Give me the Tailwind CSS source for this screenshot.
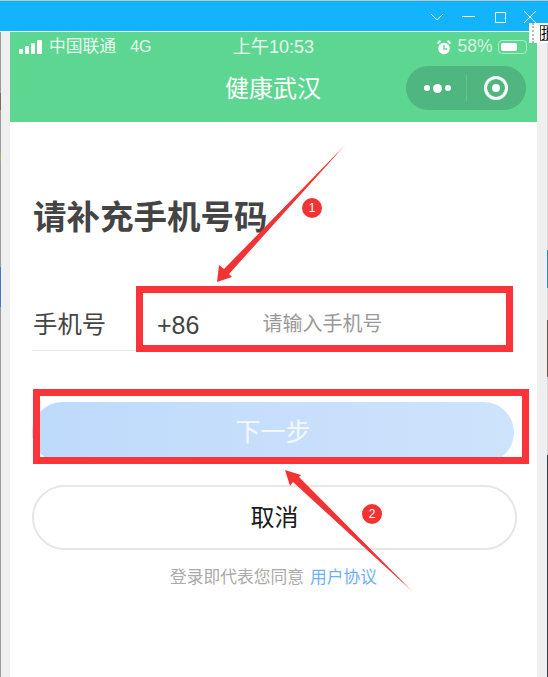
<!DOCTYPE html>
<html lang="zh-CN">
<head>
  <meta charset="UTF-8">
  <title>健康武汉</title>
  <script src="https://cdn.jsdelivr.net/npm/@tailwindcss/browser@4"></script>
</head>
<body class="bg-white">
  <div class="relative flex flex-col w-[548px] h-[677px] overflow-hidden font-['Liberation_Sans','Noto_Sans_CJK_SC',sans-serif]">

    <!-- window title bar -->
    <div class="flex items-center justify-end shrink-0 h-[32px] bg-[#12b5fd] border-t border-t-[#c4c4c4] border-b border-b-white text-white">
      <svg class="ml-[430px] mr-[8px]" width="110" height="30" viewBox="430 1 110 30" fill="none" stroke="#fff" stroke-width="1">
        <path d="M431 14l6 6 6-6"/>
        <path d="M462 16.500h13"/>
        <path d="M495.500 12.500h10v10h-10z"/>
        <path d="M524 11l12 12M536 11l-12 12"/>
      </svg>
    </div>

    <div class="flex flex-1 min-h-0">
      <!-- left edge of the window behind -->
      <div class="flex shrink-0 w-[10px] bg-[#efefef]">
        <div class="flex flex-col w-[1px] bg-[#9a9a9a]">
          <div class="h-[17px] mt-[61px] bg-[#7d6a5c]"></div>
          <div class="h-[8px] mt-[43px] bg-[#8fb37d]"></div>
          <div class="h-[40px] mt-[106px] bg-[#3f78c8]"></div>
        </div>
      </div>

      <!-- mini program page -->
      <main class="flex flex-col w-[527px] bg-white">
        <header class="shrink-0 h-[90px] bg-[#5cd691] text-white">
          <div class="flex items-center h-[30px] pl-[9px] text-[18px] text-white/85">
            <div class="flex items-end gap-[2px] w-[23px] h-[14px]">
              <span class="w-[4px] h-[5px] bg-white rounded-[1px]"></span>
              <span class="w-[4px] h-[8px] bg-white rounded-[1px]"></span>
              <span class="w-[4px] h-[11px] bg-white rounded-[1px]"></span>
              <span class="w-[5px] h-[14px] bg-white rounded-[1px]"></span>
            </div>
            <span class="ml-[7px] text-[16.800px]">中国联通</span>
            <span class="ml-[14px] text-[16px]">4G</span>
            <span class="ml-[78px] w-[88px] text-center whitespace-nowrap">上午10:53</span>
            <svg class="ml-[120px]" width="14" height="15" viewBox="0 0 14 15">
              <circle cx="7" cy="8.500" r="5.800" fill="#fff"/>
              <path d="M7 5v4h3" fill="none" stroke="#5cd691" stroke-width="1.400"/>
              <path d="M0.500 3.500L3.500 0.800M13.500 3.500L10.500 0.800" stroke="#fff" stroke-width="2"/>
            </svg>
            <span class="ml-[6px] text-[17.500px] leading-none text-white/75">58%</span>
            <div class="flex items-center ml-[5px] w-[29px] h-[14px] p-[2px] border border-white/50 rounded-[4px]">
              <div class="w-[16px] h-full bg-white rounded-[2px]"></div>
            </div>
          </div>
          <div class="relative flex items-center justify-center h-[60px] text-[24px] pb-[6px] pr-[1px]">
            健康武汉
            <div class="absolute left-[396px] top-[4px] flex items-center w-[120px] h-[44px] rounded-full bg-[#4fb680]">
              <div class="flex items-center justify-center gap-[3px] w-[60px] pl-[2px]">
                <span class="w-[6px] h-[6px] rounded-full bg-white"></span>
                <span class="w-[9px] h-[9px] rounded-full bg-white"></span>
                <span class="w-[6px] h-[6px] rounded-full bg-white"></span>
              </div>
              <div class="w-px h-[26px] bg-white/15"></div>
              <div class="flex items-center justify-center w-[59px] pr-[1px]">
                <div class="flex items-center justify-center w-[24px] h-[24px] rounded-full border-[3px] border-white">
                  <span class="w-[8px] h-[8px] rounded-full bg-white"></span>
                </div>
              </div>
            </div>
          </div>
        </header>

        <div class="flex flex-col flex-1 pl-[22px] pr-[20px]">
          <h1 class="mt-[76px] pl-[1px] text-[33.500px] leading-[40px] font-bold text-[#444] whitespace-nowrap">请补充手机号码</h1>

          <div class="flex items-center mt-[49px] h-[64px]">
            <div class="flex items-center w-[104px] h-[64px] pl-[1px] pt-[14px] border-b border-[#e8e8e8] text-[24.400px] text-[#444]">手机号</div>
            <span class="ml-[21px] mt-[14px] text-[25px] text-[#444]">+86</span>
            <span class="ml-[63px] mt-[10px] text-[20px] text-[#999]">请输入手机号</span>
          </div>

          <button class="mt-[51px] flex items-center justify-center w-[482px] h-[61px] rounded-full bg-gradient-to-r from-[#bedafb] to-[#cee3fc] text-[25px] text-white/80">下一步</button>

          <button class="mt-[22px] flex items-center justify-center w-[485px] h-[65px] rounded-full border-2 border-[#e6e6e6] text-[24px] text-[#1a1a1a]">取消</button>

          <p class="mt-[18px] pl-[138px] text-[16.750px] leading-[20px] text-[#aaa] whitespace-nowrap">登录即代表您同意<span class="ml-[6px] text-[#6fb0f5]">用户协议</span></p>
        </div>
      </main>

      <!-- right edge of the window behind -->
      <div class="flex justify-end shrink-0 w-[11px] bg-[#efefef]">
        <div class="flex flex-col w-[1px] bg-[#d8d8d8]">
          <div class="h-[38px] mt-[218px] bg-[#1f8fc0]"></div>
          <div class="h-[57px] mt-[32px] bg-[#6b5a50]"></div>
          <div class="flex-1 mt-[78px] bg-[#333b44]"></div>
        </div>
      </div>
    </div>

    <!-- clipped tooltip of another window -->
    <div class="absolute left-[529px] top-[23px] flex items-center w-[19px] h-[20px] pl-[3px] bg-white overflow-hidden text-[14px] leading-none text-black">
      <div class="h-[20px] w-[2px] border-l-2 border-dotted border-[#bbb]"></div>
      <span class="ml-[6px] whitespace-nowrap border border-[#555]">批</span>
    </div>

    <!-- annotations drawn on the screenshot -->
    <svg class="absolute inset-0" width="548" height="677" viewBox="0 0 548 677">
      <defs>
        <linearGradient id="tailOne" gradientUnits="userSpaceOnUse" x1="347" y1="143" x2="335" y2="156">
          <stop offset="0" stop-color="#f23333" stop-opacity="0.2"/>
          <stop offset="1" stop-color="#f23333"/>
        </linearGradient>
        <linearGradient id="tailTwo" gradientUnits="userSpaceOnUse" x1="414" y1="593" x2="402" y2="581">
          <stop offset="0" stop-color="#f23333" stop-opacity="0.2"/>
          <stop offset="1" stop-color="#f23333"/>
        </linearGradient>
      </defs>
      <polygon points="347,143 229,274 232,277 217,282 219,265 224,269" fill="url(#tailOne)"/>
      <polygon points="414,593 293,482 290,486 285,470 301,475 299,477" fill="url(#tailTwo)"/>
    </svg>
    <div class="absolute left-[136px] top-[286px] w-[377px] h-[66px] border-[7px] border-[#fb3439]"></div>
    <div class="absolute left-[33px] top-[389px] w-[496px] h-[75px] border-[7px] border-[#fb3439]"></div>
    <div class="absolute left-[302px] top-[198px] flex items-center justify-center w-[20px] h-[20px] rounded-full bg-[#f23333] text-[12px] text-white">1</div>
    <div class="absolute left-[362px] top-[504px] flex items-center justify-center w-[20px] h-[20px] rounded-full bg-[#f23333] text-[12px] text-white">2</div>
  </div>
</body>
</html>
